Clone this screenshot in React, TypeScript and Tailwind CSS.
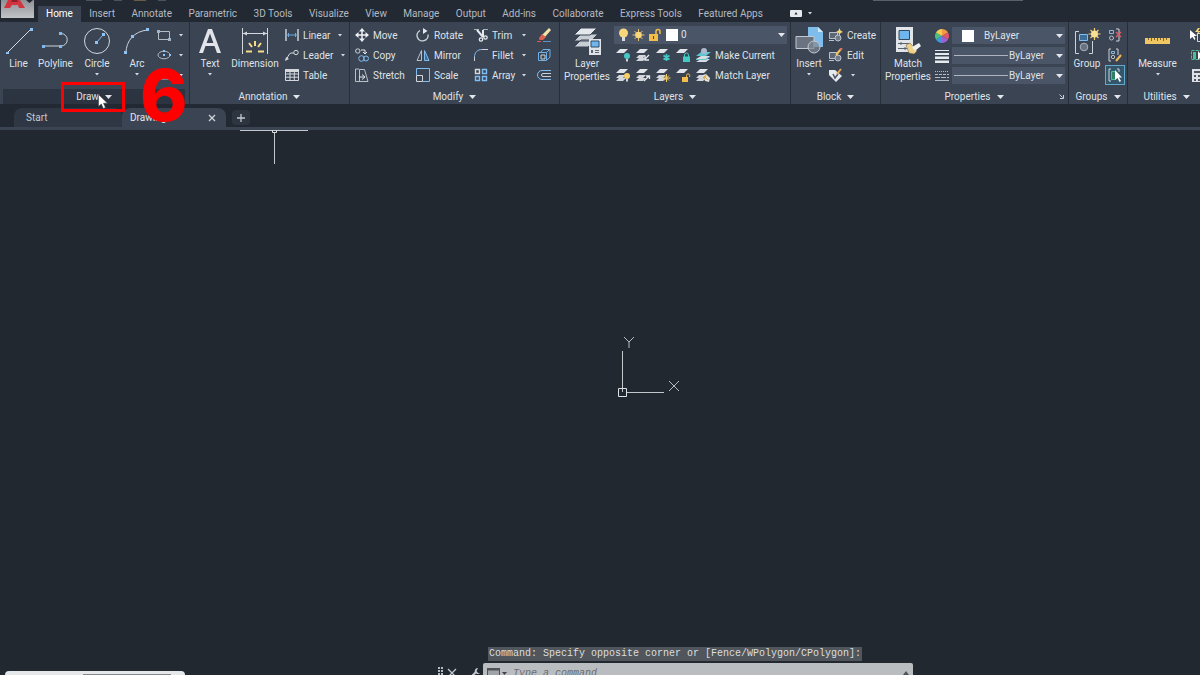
import type { ReactNode } from "react"
import { clsx } from "clsx"

const ribbonTabs = [
  "Home", "Insert", "Annotate", "Parametric", "3D Tools", "Visualize", "View",
  "Manage", "Output", "Add-ins", "Collaborate", "Express Tools", "Featured Apps",
]

/* ---------- shared bits ---------- */

function Svg({ w, h, children, className }: { w: number; h: number; children: ReactNode; className?: string }) {
  return (
    <svg width={w} height={h} viewBox={`0 0 ${w} ${h}`} fill="none" className={clsx("shrink-0", className)} aria-hidden="true">
      {children}
    </svg>
  )
}

function Caret({ small }: { small?: boolean }) {
  return small ? (
    <Svg w={4} h={3}><path d="M0 0h4L2 2.6z" fill="#d5dae0" /></Svg>
  ) : (
    <Svg w={7} h={4}><path d="M0 0h7L3.5 4z" fill="#e3e6ea" /></Svg>
  )
}

function Panel({ title, className, hot, launcher, children }: {
  title: string
  className: string
  hot?: boolean
  launcher?: boolean
  children: ReactNode
}) {
  return (
    <section aria-label={title} className={clsx("flex shrink-0 flex-col border-r border-[#262e3a] bg-[#3b4453]", className)}>
      <div className="flex h-[67px] items-start pt-[3px]">{children}</div>
      <div className={clsx("flex h-[15px] items-center", hot && "mr-1 ml-[3px] bg-[#2d3441]")}>
        <button className="flex flex-1 items-center justify-center gap-1.5 leading-3">
          {title}
          <Caret />
        </button>
        {launcher && (
          <button aria-label={`${title} settings`} className="-ml-2 pr-1">
            <Svg w={5} h={5}><path d="M0.5 0.5l3 3M4.5 1v3.5H1" stroke="#cdd2d9" /></Svg>
          </button>
        )}
      </div>
    </section>
  )
}

function BigButton({ icon, label, className, caret }: { icon: ReactNode; label: string; className: string; caret?: boolean }) {
  return (
    <button className={clsx("flex shrink-0 flex-col items-center", className)}>
      <span className="flex h-8 items-center justify-center">{icon}</span>
      <span className="text-center leading-[13px]">{label}</span>
      {caret && <span className="mt-[3px]"><Caret small /></span>}
    </button>
  )
}

function Tool({ icon, label, name, caret }: { icon: ReactNode; label?: string; name?: string; caret?: boolean }) {
  return (
    <button aria-label={label ? undefined : name} className="flex h-5 items-center gap-1 whitespace-nowrap">
      {icon}
      {label}
      {caret && <span className="ml-1"><Caret small /></span>}
    </button>
  )
}

/* ---------- draw ---------- */

const LineIcon = () => (
  <Svg w={28} h={28}>
    <path d="M2 26L26 2" stroke="#d4d8dd" />
    <path d="M1 25h3v2H1zM25 1h3v3h-3z" fill="#8fc3f5" />
  </Svg>
)
const PolylineIcon = () => (
  <Svg w={28} h={20}>
    <path d="M1 15h18a6 6 0 000-12.500" stroke="#cdd2d8" />
    <path d="M0 14h3v3H0zM17 14h3v3h-3zM17 1h3v3h-3z" fill="#7fb8ee" />
  </Svg>
)
const CircleIcon = () => (
  <Svg w={28} h={28}>
    <circle cx="14" cy="14" r="12.500" stroke="#d4d8dd" />
    <path d="M14 15l6-7" stroke="#7fb8ee" />
    <path d="M12 14h3v3h-3zM19 6h3v3h-3z" fill="#8fc3f5" />
  </Svg>
)
const ArcIcon = () => (
  <Svg w={26} h={27}>
    <path d="M2 25C2 13 10 3 24 2" stroke="#cdd2d8" />
    <path d="M0 23h3v3H0zM7 7h3v3H7zM22 0h3v3h-3z" fill="#8fc3f5" />
  </Svg>
)
const RectIcon = () => (
  <Svg w={14} h={14}>
    <path d="M1.500 3.500h11v8h-11z" stroke="#b5bbc4" />
    <path d="M0 2h3v3H0zM11 10h3v3h-3z" fill="#9fb4ca" />
  </Svg>
)
const EllipseIcon = () => (
  <Svg w={14} h={14}>
    <ellipse cx="7" cy="7" rx="6" ry="3.800" stroke="#b5bbc4" />
    <path d="M6 6h2v2H6zM6 2h2v2H6zM12 6h2v2h-2z" fill="#8fc3f5" />
  </Svg>
)
const HatchIcon = () => (
  <Svg w={14} h={14}>
    <path d="M1 1v10h12M1 5l6 6M5 5l6 6" stroke="#b5bbc4" />
  </Svg>
)

/* ---------- annotation ---------- */

const TextIcon = () => (
  <Svg w={22} h={26}>
    <path d="M0 25L9 1h4l9 24h-4l-2.500-7h-9L4 25zM7.600 15h6.800L11 5.500z" fill="#e1e4e9" fillRule="evenodd" />
  </Svg>
)
const DimensionIcon = () => (
  <Svg w={28} h={28}>
    <path d="M1.500 1v26M26.500 1v26M2 6.500h24" stroke="#d4d8dd" />
    <path d="M2 6.500l4-2v4zM26 6.500l-4-2v4z" fill="#d4d8dd" />
    <path d="M14 14v5M8 16l3 4M20 16l-3 4M5 24.500h6M23 24.500h-6" stroke="#f6dc86" strokeWidth="2" />
  </Svg>
)
const LinearIcon = () => (
  <Svg w={14} h={14}>
    <path d="M1 1v12M13 1v12" stroke="#d4d8dd" strokeWidth="1.400" />
    <path d="M1 7h12M3.500 5v4M10.500 5v4" stroke="#6fa8dc" />
  </Svg>
)
const LeaderIcon = () => (
  <Svg w={14} h={14}>
    <path d="M1 12C3 10 3 6 6 5h3" stroke="#d4d8dd" />
    <circle cx="11" cy="4.500" r="2.200" stroke="#d4d8dd" />
    <path d="M0 13l1-4 3 2z" fill="#d4d8dd" />
  </Svg>
)
const TableIcon = () => (
  <Svg w={14} h={14}>
    <path d="M0.500 1.500h13v11h-13zM0.500 6h13M0.500 9.200h13M5 4v8.500M9.300 4v8.500" stroke="#d4d8dd" />
    <path d="M0 1h14v3H0z" fill="#d4d8dd" />
  </Svg>
)

/* ---------- modify ---------- */

const MoveIcon = () => (
  <Svg w={14} h={14}>
    <path d="M7 2v10M2 7h10" stroke="#eef0f3" strokeWidth="1.500" />
    <path d="M7 0l3 3.500H4zM7 14l3-3.500H4zM0 7l3.500-3v6zM14 7l-3.500-3v6z" fill="#eef0f3" />
  </Svg>
)
const CopyIcon = () => (
  <Svg w={14} h={14}>
    <circle cx="2.800" cy="3" r="2.200" stroke="#cdd2d8" />
    <path d="M6 2h4v3M8 4l2 2 2-2" stroke="#e6e9ed" />
    <circle cx="6.500" cy="10.500" r="2.800" stroke="#80bdf2" />
    <circle cx="11" cy="10.500" r="2.500" stroke="#80bdf2" />
  </Svg>
)
const StretchIcon = () => (
  <Svg w={14} h={14}>
    <path d="M4 1H0.500v12.500H13L9.500 1.500H4.500V13" stroke="#b9c0ca" />
    <path d="M4 9h5M7 6.500L10 9l-3 2.500" stroke="#e6e9ed" />
  </Svg>
)
const RotateIcon = () => (
  <Svg w={14} h={14}>
    <path d="M4 2.500a5.500 5.500 0 108 4" stroke="#cdd2d8" strokeWidth="1.400" />
    <path d="M7 0v6l4.500-3z" fill="#e6e9ed" />
  </Svg>
)
const MirrorIcon = () => (
  <Svg w={14} h={14}>
    <path d="M5.500 2.500v10H1z" stroke="#b9c0ca" />
    <path d="M8.500 2.500v10H13z" fill="#3c6e9d" stroke="#80bdf2" />
  </Svg>
)
const ScaleIcon = () => (
  <Svg w={14} h={14}>
    <path d="M0.500 7V0.500h13v13H7" stroke="#80bdf2" />
    <path d="M0.500 7.500h6v6h-6z" stroke="#d4d8dd" />
  </Svg>
)
const TrimIcon = () => (
  <Svg w={14} h={14}>
    <path d="M0 1.500h14" stroke="#a8b0bb" strokeDasharray="5 4" />
    <path d="M3 2l6 7M9 2v7" stroke="#e6e9ed" strokeWidth="2" />
    <circle cx="7" cy="11.500" r="1.700" stroke="#e6e9ed" strokeWidth="1.300" />
    <circle cx="11.500" cy="9.500" r="1.700" stroke="#e6e9ed" strokeWidth="1.300" />
  </Svg>
)
const FilletIcon = () => (
  <Svg w={14} h={14}>
    <path d="M0.500 13V9" stroke="#cdd2d8" />
    <path d="M0.500 9c0-4.500 3-7.500 7.500-7.500" stroke="#80bdf2" />
    <path d="M8 1.500h6" stroke="#cdd2d8" />
  </Svg>
)
const ArrayIcon = () => (
  <Svg w={14} h={14}>
    <path d="M1.500 1.500h4v4h-4z" stroke="#d4d8dd" strokeWidth="1.400" />
    <path d="M8.500 1.500h4v4h-4zM1.500 8.500h4v4h-4zM8.500 8.500h4v4h-4z" stroke="#80bdf2" strokeWidth="1.400" />
  </Svg>
)
const EraseIcon = () => (
  <Svg w={14} h={14}>
    <path d="M12 0l2 2-6 7-3-2z" fill="#f3e3a8" />
    <path d="M5 6l4 3-3 3H2.500L2 10z" fill="#d9634f" />
    <path d="M0 13.500h4" stroke="#e05a4a" />
    <path d="M6 13.500h8" stroke="#5a93c9" />
  </Svg>
)
const ExplodeIcon = () => (
  <Svg w={14} h={14}>
    <path d="M1.500 4.500h8v8h-8zM4 4l2-2.500h7V9L10 12M9.500 4.500l3-3" stroke="#6faee6" />
    <path d="M4 7h4v4H4z" stroke="#cdd2d8" />
  </Svg>
)
const OffsetIcon = () => (
  <Svg w={14} h={14}>
    <path d="M14 2.500H5a4.500 4.500 0 000 9h9" stroke="#80bdf2" />
    <path d="M14 5.500H6a1.500 1.500 0 000 3h8" stroke="#cdd2d8" />
  </Svg>
)

/* ---------- layers ---------- */

const LayerPropsIcon = () => (
  <Svg w={28} h={28}>
    <path d="M8 13l-7 7h14l7-7zM8 7l-7 7h17l7-7z" fill="#c9ced5" stroke="#3b4453" />
    <path d="M8 1L1 8h16l7-7z" fill="#e4e7eb" stroke="#3b4453" />
    <path d="M16 12h12v16H16z" fill="#dfe3e8" />
    <path d="M18 14h8v6h-8z" fill="#6fb5ee" stroke="#2d4a66" />
    <path d="M18 23h2v3h-2zM22 23h4v1h-4zM22 25h4v1h-4z" fill="#5b6675" />
  </Svg>
)

function LayerIcon({ stack, children }: { stack?: boolean; children: ReactNode }) {
  return (
    <Svg w={15} h={14}>
      {stack && <path d="M3 7L0 10h7l3-3zM3 10l-3 3h7l3-3z" fill="#d3d7dd" />}
      <path d="M4 1L0 5h8l4-4z" fill="#e1e4e9" />
      {children}
    </Svg>
  )
}

const bulb = (color: string) => (
  <>
    <circle cx="11" cy="8" r="3" fill={color} />
    <path d="M10 11h2v2.500h-2z" fill="#cfd4da" />
  </>
)
const arrowUp = <path d="M8 13l5-5M10 8h3.500v3" stroke="#e6e9ed" strokeWidth="1.300" />
const arrowDown = <path d="M13 7l-4 4M9 8v4h4" stroke="#e6e9ed" strokeWidth="1.300" />

const layerRowOne: { name: string; icon: ReactNode }[] = [
  { name: "Layer off", icon: <LayerIcon>{bulb("#46c8c4")}</LayerIcon> },
  { name: "Layer isolate", icon: <LayerIcon stack>{arrowDown}</LayerIcon> },
  { name: "Layer freeze", icon: <LayerIcon><path d="M10.500 6v7M7.500 7.500l6 4M13.500 7.500l-6 4" stroke="#46c8c4" strokeWidth="1.600" /></LayerIcon> },
  { name: "Layer lock", icon: <LayerIcon><path d="M7 8.500h7V14H7z" fill="#46c8c4" /><path d="M8.500 9V7a2 2 0 014 0v2" stroke="#46c8c4" /></LayerIcon> },
]
const layerRowTwo: { name: string; icon: ReactNode }[] = [
  { name: "Turn all layers on", icon: <LayerIcon stack>{bulb("#f6cf66")}</LayerIcon> },
  { name: "Layer unisolate", icon: <LayerIcon stack>{arrowUp}</LayerIcon> },
  { name: "Thaw all layers", icon: <LayerIcon stack><path d="M10.500 6v8M6.500 10h8M8 7.500l5 5M13 7.500l-5 5" stroke="#f6cf66" /></LayerIcon> },
  { name: "Layer unlock", icon: <LayerIcon><path d="M6 9h6v5H6z" fill="#f2bd4b" /><path d="M10.500 9V7.500a1.600 1.600 0 013.200 0V9" stroke="#f2bd4b" /></LayerIcon> },
]

const MakeCurrentIcon = () => (
  <Svg w={15} h={14}>
    <path d="M5 8l-5 3h10l4-3zM5 11l-5 3h10l4-3z" fill="#d9dde2" />
    <path d="M5 4L0 8h10l5-4z" fill="#5ec4cf" />
    <path d="M0 11.500h10l4-3" stroke="#5ec4cf" />
    <circle cx="8" cy="3" r="3" fill="#aeb9d0" />
  </Svg>
)
const MatchLayerIcon = () => (
  <LayerIcon stack>
    <path d="M7 7l3-1 4 4-1 4-4-1z" fill="#e6e1d2" />
    <path d="M8 8l4 4M10 7l-2 4" stroke="#d1a544" />
  </LayerIcon>
)

/* ---------- block ---------- */

const InsertIcon = () => (
  <Svg w={28} h={28}>
    <path d="M13 0h10l5 5v15H13z" fill="#7fbdec" />
    <path d="M23 0v5h5z" fill="#d3e8f9" />
    <path d="M1 9.500h18v12H1z" fill="#6b7380" stroke="#c2c8d0" />
    <circle cx="19" cy="20" r="6" fill="#808894" fillOpacity="0.700" stroke="#c2c8d0" />
  </Svg>
)
const BlockBase = () => (
  <>
    <path d="M0.500 4.500h8v6h-8z" fill="#5d6675" stroke="#bcc2cb" />
    <circle cx="9" cy="10" r="3" fill="#727b89" stroke="#bcc2cb" />
    <path d="M0 12.500h5" stroke="#bcc2cb" />
  </>
)
const CreateIcon = () => (
  <Svg w={14} h={14}>
    <BlockBase />
    <path d="M10.500 0l1 2.500L14 4l-2.500 1-1 2.500-1-2.500L7 4l2.500-1.500z" fill="#f4d678" />
  </Svg>
)
const EditIcon = () => (
  <Svg w={14} h={14}>
    <BlockBase />
    <path d="M7 7l5-6" stroke="#f2c45c" strokeWidth="2" />
    <path d="M11 2l2-2" stroke="#e2725f" strokeWidth="2" />
  </Svg>
)
const AttributeIcon = () => (
  <Svg w={14} h={14}>
    <path d="M0 2h6l7 6-6 6-7-7z" fill="#e6e9ed" />
    <path d="M4 6l2 4 3-4" stroke="#4b5566" strokeWidth="1.500" />
    <path d="M8 6l4-5" stroke="#e9a24f" strokeWidth="2" />
  </Svg>
)

/* ---------- properties, groups, utilities ---------- */

const MatchPropsIcon = () => (
  <Svg w={28} h={28}>
    <path d="M2 0h17v25H2z" fill="#e1e4e8" />
    <path d="M5 3.500h10.500v9H5z" fill="#6fb5ee" stroke="#34495e" />
    <path d="M4 16.500h12M4 21.500h10M7 15v3M11 20v3" stroke="#59636f" />
    <path d="M12 18l4-2 7 8-3 3-5-1z" fill="#efd28a" stroke="#7b6a42" strokeWidth="0.600" />
    <path d="M18 20l7-4 2 3-6 5z" fill="#eef0f2" />
  </Svg>
)
const ColorWheel = () => (
  <Svg w={14} h={14}>
    <path d="M7 7V0a7 7 0 016 3.500z" fill="#f39a3e" />
    <path d="M7 7l6-3.500a7 7 0 010 7z" fill="#e2566a" />
    <path d="M7 7l6 3.500A7 7 0 017 14z" fill="#9b62d0" />
    <path d="M7 7v7a7 7 0 01-6-3.500z" fill="#3f97e4" />
    <path d="M7 7l-6 3.500a7 7 0 010-7z" fill="#4bbf7f" />
    <path d="M7 7L1 3.500A7 7 0 017 0z" fill="#f4cd55" />
  </Svg>
)
const WeightIcon = () => (
  <Svg w={14} h={14}>
    <path d="M0 1h14v1H0zM0 4h14v2H0zM0 7.500h14V10H0zM0 11.500h14v2.500H0z" fill="#e6e9ed" />
  </Svg>
)
const LinetypeIcon = () => (
  <Svg w={14} h={14}>
    <path d="M0 2.500h14" stroke="#b5bbc4" strokeDasharray="1 1" />
    <path d="M0 5.500h14" stroke="#b5bbc4" strokeDasharray="3 1" />
    <path d="M0 8.500h14" stroke="#b5bbc4" strokeDasharray="5 1" />
    <path d="M0 11.500h14" stroke="#b5bbc4" />
  </Svg>
)
const GroupIcon = () => (
  <Svg w={27} h={28}>
    <path d="M5 4.500H1.500v22H5M15 26.500h3.500V14" stroke="#cdd2d8" />
    <path d="M5.500 7.500h8v6h-8z" fill="#3d6d99" stroke="#80bdf2" />
    <circle cx="10" cy="20" r="3.800" fill="#697280" stroke="#a9b0ba" />
    <path d="M20.500 1v12M14.500 7h12M16.500 3l8 8M24.500 3l-8 8" stroke="#f5cf73" strokeWidth="1.200" />
    <circle cx="20.500" cy="7" r="3.500" fill="#f8dd94" />
  </Svg>
)
const UngroupIcon = () => (
  <Svg w={14} h={14}>
    <path d="M1.500 2.500h4v3h-4z" stroke="#8ab8df" />
    <circle cx="3.500" cy="10" r="2" stroke="#b9c0ca" />
    <path d="M8 1h3v12H8" stroke="#cdd2d8" />
    <path d="M8 4l5 5M13 4L8 9" stroke="#e25b63" strokeWidth="1.300" />
  </Svg>
)
const GroupEditIcon = () => (
  <Svg w={14} h={14}>
    <path d="M3 1H1v12h2M8 1h2v6" stroke="#cdd2d8" />
    <path d="M3.500 3.500h3v2h-3z" stroke="#8ab8df" />
    <circle cx="5" cy="9" r="1.700" stroke="#b9c0ca" />
    <path d="M8 13l5-6" stroke="#efb95a" strokeWidth="2" />
  </Svg>
)
const GroupSelectIcon = () => (
  <Svg w={14} h={14}>
    <path d="M3 1H1v12h2M9 1h2v3" stroke="#cdd2d8" />
    <path d="M3.500 3.500h4v8h-4z" fill="#2f7f64" stroke="#4dbf8e" />
    <path d="M7 2v10l2.500-2 2 4 1.500-1-2-3.500h3z" fill="#fff" />
  </Svg>
)
const RulerIcon = () => (
  <Svg w={25} h={6}>
    <path d="M0 0h25v6H0z" fill="#f0c763" />
    <path d="M3.500 0v2M6.500 0v3M9.500 0v2M12.500 0v3M15.500 0v2M18.500 0v3M21.500 0v2" stroke="#7f6426" />
  </Svg>
)
const QuickSelectIcon = () => (
  <Svg w={14} h={14}>
    <path d="M0 2v9l2.500-2 2 3 1-1-1.500-3h3z" fill="#fff" />
    <path d="M7.500 5.500h6v8h-6z" stroke="#d4d8dd" />
    <path d="M8 0L5 4h3L6 7l5-4H8l2-3z" fill="#f4d678" />
  </Svg>
)
const SelectAllIcon = () => (
  <Svg w={14} h={14}>
    <path d="M1.500 2.500h11v9h-11z" stroke="#4dbf8e" strokeDasharray="3 1" />
    <path d="M3 4h3v7H3z" fill="#4dbf8e" />
    <path d="M8 3v9l2-2h4z" fill="#fff" />
  </Svg>
)
const CalculatorIcon = () => (
  <Svg w={14} h={14}>
    <path d="M2 1h12v13H2z" fill="#dde1e6" />
    <path d="M4 3h9v2H4zM4 7h2v2H4zM8 7h2v2H8zM12 7h2v2h-2zM4 11h2v2H4zM8 11h2v2H8z" fill="#4b5566" />
  </Svg>
)

function PropSelect({ label, swatch }: { label: string; swatch?: boolean }) {
  return (
    <div className="relative flex h-[17px] w-[113px] items-center bg-[#4a5568]">
      <select
        aria-label={label}
        className={clsx("h-full w-full appearance-none bg-transparent leading-3 outline-none", swatch ? "pl-8" : "pl-[57px]")}
      >
        <option>ByLayer</option>
      </select>
      {swatch
        ? <span className="pointer-events-none absolute left-2.5 h-3 w-3 bg-white" />
        : <span className="pointer-events-none absolute left-0.5 h-px w-[54px] bg-[#aeb5bf]" />}
      <span className="pointer-events-none absolute right-0.5"><Caret /></span>
    </div>
  )
}

/* ---------- page sections ---------- */

function TitleAndTabs() {
  return (
    <header className="relative h-[22px] bg-[#222933]">
      <div className="absolute top-0 right-[177px] h-px w-[150px] bg-[#59616c]" />
      <div className="absolute top-0 left-[86px] flex gap-3">
        <span className="h-px w-4 bg-[#4b535f]" />
        <span className="h-px w-2 bg-[#4b535f]" />
        <span className="h-px w-3 bg-[#6b5b45]" />
        <span className="h-px w-2 bg-[#4b535f]" />
      </div>
      <button aria-label="Application menu" className="absolute top-0 left-px z-10 h-[18px] w-[33px] bg-linear-to-b from-[#8e9196] to-[#c3c4c6]">
        <Svg w={33} h={18}>
          <path d="M7 0h12l5 8h-6l-1-3h-6L9 8H3z" fill="#d3353f" />
          <path d="M11 0h5l1 2h-7z" fill="#8f1f2a" />
          <path d="M25 0h7l-3.500 3z" fill="#22272f" />
        </Svg>
      </button>
      <nav className="flex h-full items-end pl-[38px]">
        <div className="flex w-[733px] justify-between">
          {ribbonTabs.map((tab, i) => (
            <button
              key={tab}
              className={clsx(
                "h-4 px-2 pb-px leading-[15px] whitespace-nowrap",
                i === 0 ? "bg-[#3b4453] text-white" : "text-[#b4bac2]"
              )}
            >
              {tab}
            </button>
          ))}
        </div>
        <button aria-label="Ribbon display" className="ml-[19px] flex h-4 items-center gap-1.5 pb-px">
          <Svg w={12} h={7}>
            <rect width="12" height="7" rx="1" fill="#e6e9ed" />
            <path d="M4.500 4.500L6 2l1.500 2.500z" fill="#222933" />
          </Svg>
          <Caret small />
        </button>
      </nav>
    </header>
  )
}

function Ribbon() {
  return (
    <div className="flex overflow-hidden bg-[#3b4453] text-[#dfe2e7]">
      <Panel title="Draw" className="w-[190px]" hot>
        <BigButton className="w-[37px]" icon={<LineIcon />} label="Line" />
        <BigButton className="w-[37px]" icon={<PolylineIcon />} label="Polyline" />
        <BigButton className="w-[46px]" icon={<CircleIcon />} label="Circle" caret />
        <BigButton className="w-[34px]" icon={<ArcIcon />} label="Arc" caret />
        <div className="ml-[3px] flex flex-col">
          <Tool icon={<RectIcon />} name="Rectangle" caret />
          <Tool icon={<EllipseIcon />} name="Ellipse" caret />
          <Tool icon={<HatchIcon />} name="Hatch" caret />
        </div>
      </Panel>

      <Panel title="Annotation" className="w-[160px]">
        <BigButton className="w-10" icon={<TextIcon />} label="Text" caret />
        <BigButton className="w-[50px]" icon={<DimensionIcon />} label="Dimension" />
        <div className="ml-[5px] flex flex-col">
          <Tool icon={<LinearIcon />} label="Linear" caret />
          <Tool icon={<LeaderIcon />} label="Leader" caret />
          <Tool icon={<TableIcon />} label="Table" />
        </div>
      </Panel>

      <Panel title="Modify" className="w-[210px]">
        <div className="ml-[5px] grid grid-cols-[61px_58px_48px_15px_14px]">
          <Tool icon={<MoveIcon />} label="Move" />
          <Tool icon={<RotateIcon />} label="Rotate" />
          <Tool icon={<TrimIcon />} label="Trim" />
          <button aria-label="Trim options"><Caret small /></button>
          <Tool icon={<EraseIcon />} name="Erase" />
          <Tool icon={<CopyIcon />} label="Copy" />
          <Tool icon={<MirrorIcon />} label="Mirror" />
          <Tool icon={<FilletIcon />} label="Fillet" />
          <button aria-label="Fillet options"><Caret small /></button>
          <Tool icon={<ExplodeIcon />} name="Explode" />
          <Tool icon={<StretchIcon />} label="Stretch" />
          <Tool icon={<ScaleIcon />} label="Scale" />
          <Tool icon={<ArrayIcon />} label="Array" />
          <button aria-label="Array options"><Caret small /></button>
          <Tool icon={<OffsetIcon />} name="Offset" />
        </div>
      </Panel>

      <Panel title="Layers" className="w-[231px]">
        <BigButton className="w-[54px]" icon={<LayerPropsIcon />} label="Layer Properties" />
        <div className="flex flex-col">
          <div className="relative my-px flex h-[18px] w-[173px] items-center bg-[#4a5568]">
            <select aria-label="Layer" className="h-full w-full appearance-none bg-transparent pl-[67px] leading-3 outline-none">
              <option>0</option>
            </select>
            <span className="pointer-events-none absolute left-1 flex items-center gap-[3px]">
              <Svg w={11} h={14}>
                <circle cx="5.500" cy="5" r="4.500" fill="#f8d67c" />
                <path d="M4 9h3v4H4z" fill="#d8dce1" />
              </Svg>
              <Svg w={13} h={14}>
                <path d="M6.500 1v12M0.500 7h12M2.500 3l8 8M10.500 3l-8 8" stroke="#e9bf62" />
                <circle cx="6.500" cy="7" r="3.300" fill="#f8d67c" />
              </Svg>
              <Svg w={13} h={14}>
                <path d="M1 6h9v7H1z" fill="#f2bd4b" />
                <path d="M8 6V3.500a2 2 0 014 0V6" stroke="#f2bd4b" strokeWidth="1.500" />
                <path d="M5 8h1v3H5z" fill="#5a4413" />
              </Svg>
              <span className="ml-0.5 h-3 w-3 bg-white" />
            </span>
            <span className="pointer-events-none absolute right-0.5"><Caret /></span>
          </div>
          <div className="flex gap-[5px] pl-0.5">
            {layerRowOne.map((l) => <Tool key={l.name} icon={l.icon} name={l.name} />)}
            <Tool icon={<MakeCurrentIcon />} label="Make Current" />
          </div>
          <div className="flex gap-[5px] pl-0.5">
            {layerRowTwo.map((l) => <Tool key={l.name} icon={l.icon} name={l.name} />)}
            <Tool icon={<MatchLayerIcon />} label="Match Layer" />
          </div>
        </div>
      </Panel>

      <Panel title="Block" className="w-[90px]">
        <BigButton className="ml-px w-[34px]" icon={<InsertIcon />} label="Insert" caret />
        <div className="ml-[3px] flex flex-col">
          <Tool icon={<CreateIcon />} label="Create" />
          <Tool icon={<EditIcon />} label="Edit" />
          <Tool icon={<AttributeIcon />} name="Edit attributes" caret />
        </div>
      </Panel>

      <Panel title="Properties" className="w-[188px]" launcher>
        <BigButton className="w-[54px]" icon={<MatchPropsIcon />} label="Match Properties" />
        <div className="grid grid-cols-[14px_113px] items-center gap-x-[3px] gap-y-[3px] pt-0.5">
          <ColorWheel />
          <PropSelect label="Object color" swatch />
          <WeightIcon />
          <PropSelect label="Lineweight" />
          <LinetypeIcon />
          <PropSelect label="Linetype" />
        </div>
      </Panel>

      <Panel title="Groups" className="w-[59px]">
        <BigButton className="w-9" icon={<GroupIcon />} label="Group" />
        <div className="flex flex-col items-center">
          <Tool icon={<UngroupIcon />} name="Ungroup" />
          <Tool icon={<GroupEditIcon />} name="Group edit" />
          <button aria-label="Group selection" aria-pressed="true" className="flex h-5 w-5 items-center justify-center border border-[#62a9cc] bg-[#33566b]">
            <GroupSelectIcon />
          </button>
        </div>
      </Panel>

      <Panel title="Utilities" className="w-[78px]">
        <BigButton className="w-[59px]" icon={<RulerIcon />} label="Measure" caret />
        <div className="ml-[3px] flex flex-col">
          <Tool icon={<QuickSelectIcon />} name="Quick select" />
          <Tool icon={<SelectAllIcon />} name="Select all" />
          <Tool icon={<CalculatorIcon />} name="Quick calculator" />
        </div>
      </Panel>
    </div>
  )
}

function FileTabs() {
  return (
    <div className="border-b-[3px] border-[#3b4453] bg-[#222933] pt-1 text-[#c3c8cf]">
      <div className="flex h-[19px] items-stretch">
        <button className="ml-3.5 flex w-[108px] items-center rounded-t-lg bg-[#2f3744] pt-px pl-3 leading-3">Start</button>
        <div className="flex w-[104px] items-center justify-between rounded-t-lg bg-[#3b4453] pt-px pr-2.5 pl-2">
          <button className="leading-3 text-[#e3e6ea]">Drawing1</button>
          <button aria-label="Close drawing">
            <Svg w={8} h={8}><path d="M1 1l6 6M7 1L1 7" stroke="#cfd4da" strokeWidth="1.300" /></Svg>
          </button>
        </div>
        <button aria-label="New drawing" className="my-0.5 ml-1.5 flex w-[18px] items-center justify-center rounded bg-[#2d3541]">
          <Svg w={8} h={8}><path d="M4 0v8M0 4h8" stroke="#c3c8cf" strokeWidth="1.300" /></Svg>
        </button>
      </div>
    </div>
  )
}

function CommandLine() {
  return (
    <div className="absolute -bottom-2 left-[436px] w-[477px] font-['Liberation_Mono','DejaVu_Sans_Mono',monospace] text-[10px]">
      <output className="ml-[52px] inline-block bg-[#50565c] px-px leading-[14px] whitespace-nowrap text-[#dcdedf]">
        Command: Specify opposite corner or [Fence/WPolygon/CPolygon]:
      </output>
      <div className="mt-0.5 flex h-5 items-center">
        <span className="flex w-[47px] items-center gap-1 pl-0.5">
          <Svg w={5} h={12}>
            <path d="M1 0v12M4 0v12" stroke="#b6bbc1" strokeWidth="2" strokeDasharray="2 1" />
          </Svg>
          <button aria-label="Close command line">
            <Svg w={10} h={12}><path d="M1 2l8 8M9 2l-8 8" stroke="#c5c9ce" strokeWidth="1.300" /></Svg>
          </button>
          <button aria-label="Customize" className="ml-2">
            <Svg w={12} h={12}>
              <path d="M1 11l6-6" stroke="#c5c9ce" strokeWidth="2" />
              <path d="M9 1a3 3 0 102 5H9L7.500 4z" fill="#c5c9ce" />
            </Svg>
          </button>
        </span>
        <label className="flex h-full flex-1 items-center gap-1 rounded-t-xs bg-[#babdc0] pr-1 pl-1">
          <Svg w={20} h={12}>
            <path d="M0.500 1.500h12v10h-12z" fill="#a0a4a8" stroke="#4d5358" />
            <path d="M0 1h13v2.500H0z" fill="#4d5358" />
            <path d="M15 5h5l-2.500 3z" fill="#3f444a" />
          </Svg>
          <input
            type="text"
            aria-label="Command"
            placeholder="Type a command"
            className="min-w-0 flex-1 bg-transparent pl-0.5 italic outline-none placeholder:text-[#696e73]"
          />
          <Svg w={6} h={4}><path d="M0 4h6L3 0z" fill="#4d5358" /></Svg>
        </label>
      </div>
    </div>
  )
}

function DrawingArea() {
  return (
    <main className="relative flex-1 overflow-hidden bg-[#212830]">
      {/* crosshair */}
      <Svg w={68} h={36} className="absolute top-0 left-60">
        <path d="M0 0.500h68M34.500 3v31" stroke="#c3c8cc" />
        <path d="M32.500 0v2.500h4V0" stroke="#dfe2e5" />
      </Svg>

      {/* UCS marker */}
      <Svg w={64} h={64} className="absolute top-[38%] left-[51.500%]">
        <path d="M4.500 14v41M9 55.500h37" stroke="#c3c8cc" />
        <path d="M0.500 51.500h8v8h-8z" stroke="#dfe2e5" />
        <path d="M6 0l5 5 5-5M11 5v6M51 44l10 10M61 44L51 54" stroke="#b7bcc1" />
      </Svg>

      <div className="absolute bottom-0 left-[5px] flex h-1 w-[180px] items-end justify-center rounded-t-sm bg-[#e4e8ea]">
        <span className="ml-16 h-px w-[88px] bg-[#84898d]" />
      </div>
      <CommandLine />
    </main>
  )
}

function StepCallout() {
  return (
    <div className="pointer-events-none absolute top-0 left-0">
      <div className="absolute top-[82px] left-[61px] h-[30px] w-16 border-[3px] border-[#fe0000]" />
      <Svg w={12} h={17} className="absolute top-[94px] left-[98px]">
        <path d="M0.500 0.500v12l2.800-2.500 2 4.500 2.200-1-2-4.300h4z" fill="#fff" stroke="#2a3039" strokeWidth="0.500" />
      </Svg>
      <span className="absolute top-[58px] left-[140px] font-[Inter,sans-serif] text-[72px] leading-[74px] font-extrabold text-[#fe0000]">6</span>
    </div>
  )
}

export default function App() {
  return (
    <div className="relative flex h-screen flex-col overflow-hidden bg-[#212830] font-[Roboto,'Open_Sans',sans-serif] text-[10px]">
      <TitleAndTabs />
      <Ribbon />
      <FileTabs />
      <DrawingArea />
      <StepCallout />
    </div>
  )
}
